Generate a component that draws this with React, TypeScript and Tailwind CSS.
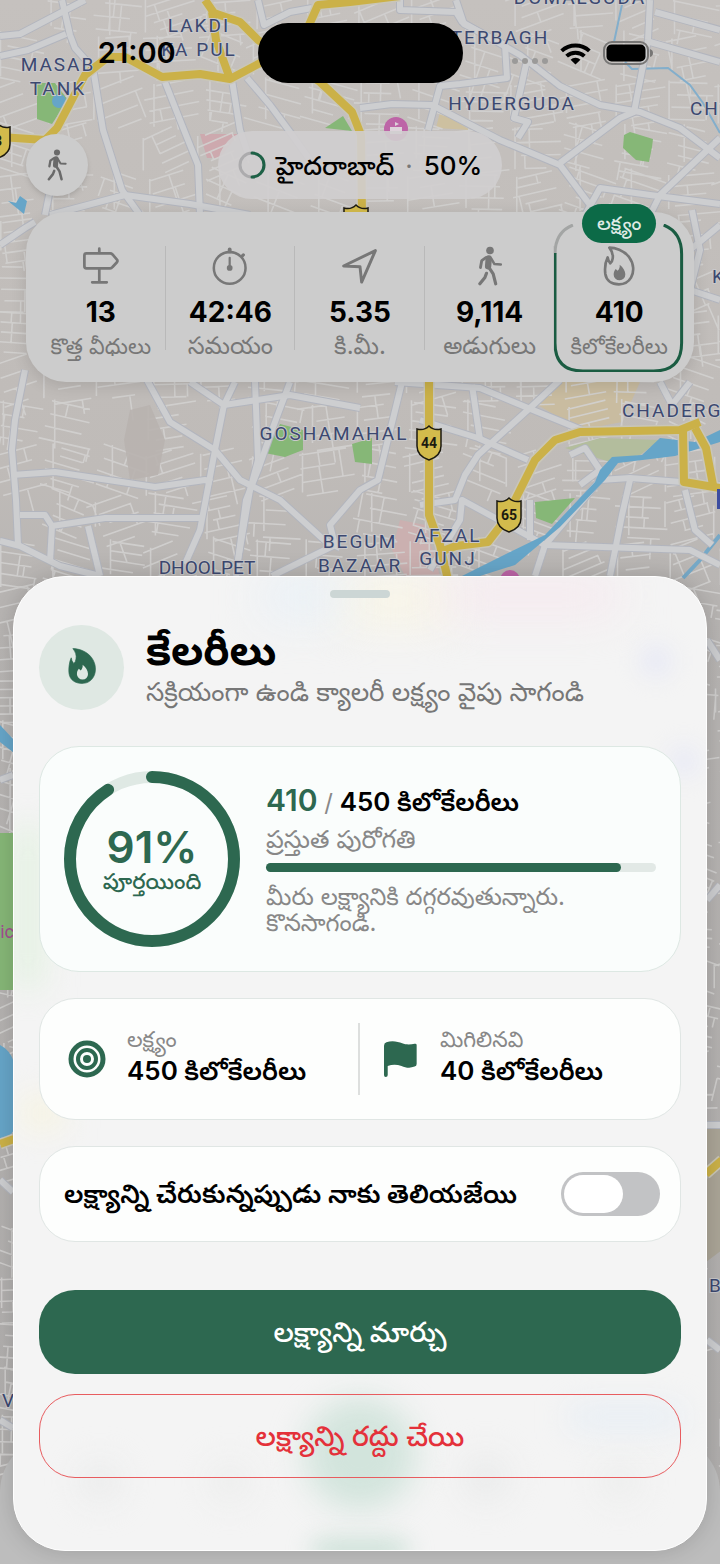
import { useState } from 'react';

const FONT = "font-['Inter','Noto_Sans_Telugu','Noto_Sans',sans-serif]";

// Small deterministic generator so the side streets stay the same on every render
function makeStreets(seed: number) {
  let s = seed;
  const rnd = () => {
    s = (s * 16807) % 2147483647;
    return s / 2147483647;
  };
  let d = '';
  for (let y = -10; y < 1564; y += 46) {
    for (let x = -10; x < 730; x += 52) {
      if (rnd() < 0.08 || (y > 620 && x > 30 && x < 650)) continue;
      const a = (rnd() - 0.5) * 0.9;
      const cos = Math.cos(a);
      const sin = Math.sin(a);
      const at = (u: number, v: number) =>
        `${(x + 26 + u * cos - v * sin).toFixed(1)} ${(y + 23 + u * sin + v * cos).toFixed(1)}`;
      const step = 8 + rnd() * 7;
      for (let v = -22; v < 24; v += step) {
        const from = -28 + rnd() * 18;
        const to = 28 - rnd() * 22;
        d += `M${at(from, v)}L${at(to, v)}`;
        if (rnd() > 0.35) {
          const u = from + rnd() * (to - from);
          d += `M${at(u, v)}L${at(u, v + step * (1 + Math.floor(rnd() * 2)))}`;
        }
      }
      d += `M${at(-24 + rnd() * 12, -24)}V${(y + 30 + rnd() * 16).toFixed(1)}`;
    }
  }
  return d;
}

const streets = makeStreets(4711);

const roads = [
  'M62 0 L70 35 L75 48 L93 68 L103 130 L122 190 L140 215',
  'M0 36 L20 34 L62 12 L85 0',
  'M0 56 L28 50 L66 34',
  'M165 82 L180 120 L198 165 L200 215',
  'M232 80 L240 130 L250 160',
  'M247 78 L270 105 L290 132 L310 160',
  'M50 215 L125 195 L190 204 L250 215',
  'M45 215 L50 190',
  'M0 245 L25 228 L35 222',
  'M258 0 L264 25 L290 12 L312 8',
  'M400 0 L400 10 L456 12 L462 22 L520 55 L560 86 L600 105 L640 112 L680 128 L720 158',
  'M456 0 L464 24 L505 45 L507 78 L460 84 L440 86 L428 130',
  'M360 108 L392 104 L432 105 L500 140 L560 165 L590 205 L600 230',
  'M527 60 L520 92 L514 118 L528 122 L518 138',
  'M560 163 L620 118 L634 112 L648 40 L650 0',
  'M650 42 L720 62', 'M655 12 L720 30',
  'M720 138 L660 195 L650 215',
  'M585 215 L600 188 L650 195 L720 204',
  'M25 370 L15 420 L12 450 L16 500 L18 545',
  'M12 475 L55 472 L155 487 L205 480 L212 482',
  'M0 541 L20 546 L60 566 L100 576',
  'M20 515 L45 515 L52 526 L105 518 L200 518',
  'M52 526 L50 562', 'M88 526 L100 576',
  'M147 380 L170 422 L215 450 L240 480 L252 486 L280 500 L324 540 L340 548',
  'M235 382 L224 405 L215 450 L200 530 L185 564',
  'M190 382 L224 405 L290 395 L360 408',
  'M255 382 L258 460 L250 490 L238 560',
  'M290 382 L272 430 L258 470 L246 500 L236 576',
  'M272 576 L335 545 L330 525 L360 490 L378 480 L402 382',
  'M395 382 L480 388 L528 408 L582 430',
  'M560 380 L530 408 L478 455 L465 475 L455 500 L420 505',
  'M420 420 L478 438 L528 460', 'M472 385 L480 440',
  'M430 570 L460 520 L462 500 L545 545 L600 480 L630 478 L720 485',
  'M545 545 L535 576', 'M545 545 L690 550 L720 565',
  'M570 455 L585 448 L600 470 L580 485', 'M530 500 L530 540',
  'M630 480 L622 515 L610 576', 'M685 490 L695 530 L712 545',
  'M660 382 L672 405 L690 382',
  'M692 210 L700 250 L690 290 L720 300', 'M690 250 L720 225',
  'M0 780 L13 775', 'M0 1180 L13 1192', 'M707 640 L720 660', 'M707 900 L720 885',
  'M707 1125 H720', 'M707 1340 L720 1350', 'M0 1420 L13 1428',
];

const highways = [
  'M0 137 L45 140 L57 128 L85 75 L108 57 L125 57 L162 77 L200 74 L230 79 L262 62 L300 45 L318 5 L350 2 L400 -4',
  'M205 0 L214 13 L240 22 L258 40 L320 82 L352 112 L361 135 L362 215',
  'M212 12 L216 40 L229 76',
  'M429 375 L429 515 L440 545 L448 580',
  'M440 552 L456 546 L488 542 L505 520 L535 460 L555 440 L580 432 L680 430 L700 422',
  'M683 430 L684 482 L720 488',
  'M695 428 L706 448 L713 485',
  'M0 1144 L14 1139',
  'M706 1174 L722 1160',
];

const mapLabels = [
  { x: 199, y: 32, text: 'LAKDI' },
  { x: 199, y: 56, text: 'KA PUL' },
  { x: 58, y: 71, text: 'MASAB' },
  { x: 58, y: 95, text: 'TANK' },
  { x: 580, y: 4, text: 'DOMALGUDA' },
  { x: 500, y: 44, text: 'TERBAGH' },
  { x: 512, y: 110, text: 'HYDERGUDA' },
  { x: 334, y: 440, text: 'GOSHAMAHAL' },
  { x: 360, y: 548, text: 'BEGUM' },
  { x: 360, y: 572, text: 'BAZAAR' },
  { x: 448, y: 542, text: 'AFZAL' },
  { x: 448, y: 565, text: 'GUNJ' },
];

const edgeLabels = [
  { x: 690, y: 115, text: 'CHIKKAD' },
  { x: 622, y: 417, text: 'CHADERGHAT' },
  { x: 712, y: 283, text: 'KACHI' },
  { x: 709, y: 1292, text: 'B' },
  { x: 2, y: 1407, text: 'V' },
];

function Shield({ x, y, text }: { x: number; y: number; text: string }) {
  return (
    <g transform={`translate(${x} ${y})`}>
      <path
        d="M-12 -14 Q-5 -12 0 -17 Q5 -12 12 -14 V3 C12 11 6 15 0 17 C-6 15 -12 11 -12 3z"
        fill="#d3bb4c"
        stroke="#1c1a10"
        strokeWidth="1.5"
      />
      <text y="5" textAnchor="middle" fontSize="14" fontWeight="700" fill="#1c1a10">{text}</text>
    </g>
  );
}

function CityMap() {
  return (
    <svg
      className="absolute inset-0 w-full h-full font-['Roboto',sans-serif]"
      viewBox="0 0 720 1564"
      preserveAspectRatio="xMidYMin slice"
      aria-hidden="true"
    >
      <defs>
        <linearGradient id="land" x1="0" y1="0" x2="0" y2="1">
          <stop offset="0" stopColor="#c5c1be" />
          <stop offset="0.3" stopColor="#bfbbb8" />
          <stop offset="0.38" stopColor="#b8b5b3" />
          <stop offset="1" stopColor="#b0aead" />
        </linearGradient>
      </defs>
      <rect width="720" height="1564" fill="url(#land)" />
      <path d="M555 382 H640 L622 422 L580 430 L538 405z" fill="#c9bca0" />
      <path d="M436 128 L440 112 L470 130z" fill="#cdc0a0" />
      <path d="M400 520 L425 525 L440 576 H405 L392 550z" fill="#cbb0b0" />
      <path d="M200 134 H238 L220 158 H207z" fill="#cda9ae" />
      <path d={streets} fill="none" stroke="#d2d0cf" strokeWidth="1.6" opacity="0.9" />
      <g fill="#b8b3af">
        <path d="M130 410 L150 405 L165 440 L158 475 L130 480 L124 440z" opacity="0.9" />
      </g>
      <g fill="#86b777">
        <path d="M37 83 H55 L68 100 L52 124 L37 119z" />
        <path d="M325 128 L343 116 L352 131z" />
        <path d="M624 135 L630 132 L653 139 L652 147 L649 162 L636 160 L623 148z" />
        <path d="M272 440 L280 424 L303 430 L303 450 L285 457 L265 453z" />
        <path d="M352 444 L372 438 V464 L355 462z" />
        <path d="M535 502 L575 498 L552 524 L536 518z" />
        <rect x="-4" y="833" width="20" height="157" />
      </g>
      <path d="M565 448 L600 438 L660 440 L640 455 L610 462z" fill="#b3bd9d" />
      <g fill="#66a5c8">
        <circle cx="59" cy="101" r="7" />
        <path d="M8 201 L16 203 L20 196 L27 201 L24 214z" />
        <path d="M0 725 L14 740 V753 L0 742z" />
        <path d="M0 1045 Q10 1050 14 1062 V1130 Q10 1138 0 1138z" />
      </g>
      <path d="M623 0 L614 42 M625 62 L632 69 L668 68 L690 85 L703 103 L720 133" fill="none" stroke="#83aecb" strokeWidth="2" />
      <path d="M720 535 L700 560 L683 578" fill="none" stroke="#76a8c6" strokeWidth="4" />
      <path d="M706 1128 H722 V1155 L706 1170z M706 1180 L722 1165 V1250 L706 1262z" fill="#aba597" />
      <g fill="none" strokeLinejoin="round">
        {roads.map((d) => <path key={d} d={d} stroke="#b2b5be" strokeWidth="8" />)}
        {roads.map((d) => <path key={d} d={d} stroke="#cdced0" strokeWidth="6" />)}
      </g>
      <path
        d="M720 430 L695 442 L660 438 L642 455 L612 457 L600 470 L595 482 L545 535 L500 557 L462 576 H480 L515 565 L560 527 L605 480 L618 463 L675 456 L720 442z"
        fill="#66a5c8"
      />
      <g fill="none" strokeLinejoin="round">
        {highways.map((d) => <path key={d} d={d} stroke="#c9c6b8" strokeWidth="11" />)}
        {highways.map((d) => <path key={d} d={d} stroke="#cbb148" strokeWidth="8" />)}
      </g>
      <circle cx="396" cy="129" r="12" fill="#bd65a7" />
      <path d="M390 127 H402 V134 H390z M395 122 L399 124 L395 126z" fill="#ded3db" />
      <circle cx="510" cy="580" r="10" fill="#bd65a7" />
      <g fill="#3c4870" fontSize="19" stroke="#c9c8ca" strokeWidth="2" paintOrder="stroke">
        <g letterSpacing="2">
          {mapLabels.map((l) => <text key={l.text} x={l.x} y={l.y} textAnchor="middle">{l.text}</text>)}
          {edgeLabels.map((l) => <text key={l.text} x={l.x} y={l.y}>{l.text}</text>)}
        </g>
        <text x="207" y="574" textAnchor="middle">DHOOLPET</text>
      </g>
      <text x="14" y="938" textAnchor="end" fontSize="18" fill="#a34c92">gic</text>
      <rect x="717" y="489" width="10" height="20" fill="#3d4da0" />
      <Shield x={-2} y={141} text="3" />
      <Shield x={356} y={222} text="" />
      <Shield x={429} y={443} text="44" />
      <Shield x={509} y={515} text="65" />
    </svg>
  );
}

function WalkIcon({ className }: { className: string }) {
  return (
    <svg className={className} viewBox="0 0 80 126" fill="none" stroke="currentColor" strokeLinecap="round" strokeLinejoin="round">
      <circle cx="40" cy="14" r="12" fill="currentColor" stroke="none" />
      <path d="M36 39 L34 64" strokeWidth="20" />
      <path d="M28 36 L14 46 L10 68" strokeWidth="9" />
      <path d="M44 40 L54 57 L74 58" strokeWidth="8" />
      <path d="M37 68 L50 88 L58 119" strokeWidth="10" />
      <path d="M29 86 L24 99 L8 119" strokeWidth="10" />
    </svg>
  );
}

const FLAME = 'M17 5 C34 5 60 12 76 33 C91 53 92 78 82 95 C72 112 57 115 46 115 C24 115 8 104 5 84 C3 68 6 46 12 34 Q13 44 20 52 Q26 47 27 38 C29 26 26 16 17 5z';
const EMBER = 'M48 56 C58 64 65 74 65 85 A17 17 0 0 1 30 86 C30 78 32 74 36 69 L42 74 C47 69 49 63 48 56z';

function FlameIcon({ className }: { className: string }) {
  return (
    <svg className={className} viewBox="0 0 92 120">
      <path d={FLAME} fill="none" stroke="currentColor" strokeWidth="8" strokeLinejoin="round" />
      <path d={EMBER} fill="currentColor" />
    </svg>
  );
}

function SolidFlameIcon({ className }: { className: string }) {
  return (
    <svg className={className} viewBox="0 0 92 120">
      <path d={FLAME} fill="currentColor" stroke="currentColor" strokeWidth="2" strokeLinejoin="round" />
      <path d={EMBER} fill="#dfe8e3" />
    </svg>
  );
}

function SignIcon({ className }: { className: string }) {
  return (
    <svg className={className} viewBox="0 0 114 118" fill="none" stroke="currentColor" strokeWidth="8" strokeLinecap="round" strokeLinejoin="round">
      <path d="M52 8 V20 M52 66 V106 M31 107 H74" />
      <path d="M14 22 H84 Q88 22 91 25 L104 40 Q107 44 104 48 L91 62 Q88 66 84 66 H14 Q8 66 8 60 V28 Q8 22 14 22z" />
    </svg>
  );
}

function StopwatchIcon({ className }: { className: string }) {
  return (
    <svg className={className} viewBox="0 0 118 126" fill="none" stroke="currentColor" strokeLinecap="round">
      <circle cx="58" cy="69" r="50" strokeWidth="8" />
      <path d="M58 11 V18" strokeWidth="12" />
      <path d="M98 31 L101 28" strokeWidth="10" />
      <path d="M58 37 V69" strokeWidth="7" />
      <circle cx="58" cy="69" r="9" fill="currentColor" stroke="none" />
    </svg>
  );
}

function LocationIcon({ className }: { className: string }) {
  return (
    <svg className={className} viewBox="-4 -4 122 122" fill="none" stroke="currentColor" strokeWidth="9" strokeLinejoin="round">
      <path d="M7 57 L104 10 L62 106 L57 59z" />
    </svg>
  );
}

function FlagIcon({ className }: { className: string }) {
  return (
    <svg className={className} viewBox="0 0 98 107">
      <path
        d="M0 14 Q0 7 7 4 C24 -3 42 2 54 7 C66 12 80 11 91 8 Q97 7 97 12 V68 Q97 74 91 76 C76 82 64 79 52 74 C38 69 24 69 11 74 V101 Q11 107 5 107 Q0 107 0 101z"
        fill="currentColor"
      />
    </svg>
  );
}

function TargetIcon({ className }: { className: string }) {
  return (
    <svg className={className} viewBox="0 0 38 38" fill="none" stroke="currentColor">
      <circle cx="19" cy="19" r="16" strokeWidth="5" />
      <circle cx="19" cy="19" r="9" strokeWidth="4" />
      <circle cx="19" cy="19" r="4" fill="currentColor" stroke="none" />
    </svg>
  );
}

function StatusBar() {
  return (
    <header className="grid grid-cols-[1fr_205px_1fr] items-center pt-[23px]">
      <div className="pl-4 text-center text-[29px] leading-8 font-semibold text-black">21:00</div>
      <div className="h-[60px] rounded-full bg-black"></div>
      <div className="flex items-center justify-center gap-3 pr-4">
        <div className="flex gap-1 pt-4">
          <span className="size-1.5 rounded-full bg-[#9b9a99]"></span>
          <span className="size-1.5 rounded-full bg-[#9b9a99]"></span>
          <span className="size-1.5 rounded-full bg-[#9b9a99]"></span>
          <span className="size-1.5 rounded-full bg-[#9b9a99]"></span>
        </div>
        <svg className="w-[31px] h-[23px]" viewBox="0 0 94 68" fill="none" stroke="#000" strokeWidth="12">
          <path d="M5 26 A62 62 0 0 1 89 26" />
          <path d="M20 42 A40 40 0 0 1 74 42" />
          <path d="M47 67 L32 53 A22 22 0 0 1 62 53z" fill="#000" stroke="none" />
        </svg>
        <svg className="w-[51px] h-6" viewBox="0 0 51 24">
          <rect x="1" y="1" width="44" height="22" rx="8" fill="none" stroke="#777675" strokeWidth="2" />
          <rect x="3.5" y="3.5" width="39" height="17" rx="5" />
          <path d="M47 8 Q50 9 50 12 Q50 15 47 16z" fill="#777675" />
        </svg>
      </div>
    </header>
  );
}

const stats = [
  { Icon: SignIcon, value: '13', label: 'కొత్త వీధులు' },
  { Icon: StopwatchIcon, value: '42:46', label: 'సమయం', large: true },
  { Icon: LocationIcon, value: '5.35', label: 'కి.మీ.', large: true },
  { Icon: WalkIcon, value: '9,114', label: 'అడుగులు', large: true },
  { Icon: FlameIcon, value: '410', label: 'కిలోకేలరీలు', goal: true },
];

function StatsCard() {
  return (
    <section className="mx-[26px] mt-[13px] grid grid-cols-5 rounded-[40px] bg-[#cccccc] px-2.5 pt-3 pb-2.5 shadow-[0_4px_16px_rgba(0,0,0,0.12)]">
      {stats.map(({ Icon, value, label, goal, large }, i) => (
        <div key={label} className="relative flex h-[148px] flex-col items-center pt-[22px]">
          {i < 3 && <span className="absolute right-0 top-[22px] h-[104px] w-px bg-[#b9b9b9]"></span>}
          {i === 3 && <span className="absolute right-0 top-[22px] h-[104px] w-px bg-[#c2c2c2]"></span>}
          {goal && (
            <>
              <svg className="absolute inset-0 w-full h-full" viewBox="0 0 130 148" preserveAspectRatio="none" fill="none" strokeWidth="3">
                <path d="M19 1 Q1 8 1 30" stroke="#a3a5a4" />
                <path d="M1 29 V119 Q1 147 29 147 H100 Q128 147 128 119 V30 Q128 8 110 1" stroke="#1a5c42" />
              </svg>
              <span className="absolute -top-5 rounded-full bg-[#0c6a47] px-[15px] text-[19px] leading-[39px] font-medium whitespace-nowrap text-[#dfeae5]">
                లక్ష్యం
              </span>
            </>
          )}
          <Icon className="h-10 w-10 text-[#777777]" />
          <strong className="mt-2.5 text-[28px] leading-8 font-bold text-black">{value}</strong>
          <span className={`mt-0.5 leading-8 whitespace-nowrap text-[#777777] ${large ? 'text-[24px]' : 'text-[22px]'}`}>
            {label}
          </span>
        </div>
      ))}
    </section>
  );
}

// Soft colour spots of the map showing through the frosted sheet
function SheetGlow() {
  return (
    <div className="absolute inset-0 overflow-hidden rounded-[52px]" aria-hidden="true">
      <span className="absolute left-[47%] top-1 h-10 w-28 bg-[#faf6e4] blur-xl"></span>
      <span className="absolute left-[36%] top-0 h-10 w-20 bg-[#e8f0f7] blur-xl"></span>
      <span className="absolute left-[62%] top-0 h-9 w-44 bg-[#f6e8ee] blur-xl"></span>
      <span className="absolute right-9 top-[70px] size-7 rounded-full bg-[#e4e6f6] blur-md"></span>
      <span className="absolute right-2 top-[170px] size-7 rounded-full bg-[#e6e8f6] blur-md"></span>
      <span className="absolute left-0 top-[250px] h-40 w-7 bg-[#e2f1e0] blur-lg"></span>
      <span className="absolute left-2 top-[520px] h-8 w-10 bg-[#f7f4e0] blur-lg"></span>
      <span className="absolute bottom-[125px] right-6 h-4 w-28 bg-[#e0ebf6] blur-lg"></span>
      <span className="absolute bottom-10 left-1/2 size-28 -translate-x-1/2 rounded-full bg-[#d2e4dc] blur-lg"></span>
      <span className="absolute -bottom-2 left-1/2 h-4 w-24 -translate-x-1/2 rounded-full bg-[#bcd9cc] blur-md"></span>
      <span className="absolute bottom-12 left-[66px] size-10 rounded-full bg-[#eaebeb] blur-lg"></span>
      <span className="absolute bottom-12 left-[196px] size-10 rounded-full bg-[#ecedec] blur-lg"></span>
      <span className="absolute bottom-12 right-[196px] size-12 rounded-full bg-[#eaebeb] blur-lg"></span>
      <span className="absolute bottom-12 right-[66px] size-10 rounded-full bg-[#ecedec] blur-lg"></span>
    </div>
  );
}

function GoalSheet() {
  const [notify, setNotify] = useState(false);
  const percent = 91;

  return (
    <section className="relative mx-[13px] mt-auto rounded-[52px] border border-white bg-[#f4f4f4] px-[25px] pt-[13px] pb-[72px] shadow-[0_0_24px_rgba(0,0,0,0.16)]">
      <SheetGlow />
      <div className="relative">
        <div className="mx-auto h-2 w-[60px] rounded-full bg-[#ccd6d5]"></div>

        <div className="mt-[27px] flex items-center gap-[22px]">
          <div className="flex size-[85px] shrink-0 items-center justify-center rounded-full bg-[#dfe8e3] pb-1">
            <SolidFlameIcon className="h-[38px] w-[30px] text-[#2d6850]" />
          </div>
          <div>
            <h1 className="text-[42px] leading-[48px] font-bold text-black">కేలరీలు</h1>
            <p className="text-[26px] leading-9 text-[#777777]">సక్రియంగా ఉండి క్యాలరీ లక్ష్యం వైపు సాగండి</p>
          </div>
        </div>

        <div className="mt-9 flex items-center gap-[26px] rounded-[40px] border border-[#dde8e3] bg-[#fafdfc] p-6">
          <div className="relative flex size-44 shrink-0 flex-col items-center justify-center">
            <svg className="absolute inset-0" viewBox="0 0 176 176" fill="none" strokeWidth="12">
              <circle cx="88" cy="88" r="82" stroke="#dfe9e4" />
              <circle
                cx="88"
                cy="88"
                r="82"
                pathLength="100"
                stroke="#2d6850"
                strokeDasharray={`${percent} 100`}
                strokeLinecap="round"
                transform="rotate(-90 88 88)"
              />
            </svg>
            <strong className="text-[44px] leading-[44px] font-semibold text-[#2d6850]">{percent}%</strong>
            <span className="text-[22px] leading-6 font-medium text-[#2d6850]">పూర్తయింది</span>
          </div>
          <div className="min-w-0 flex-1">
            <p className="text-[26px] leading-9 font-semibold text-black">
              <span className="text-[30px] text-[#2d6850]">410</span>
              <span className="text-[24px] font-normal text-[#888888]"> / </span>
              450 కిలోకేలరీలు
            </p>
            <p className="text-[25px] leading-9 text-[#888888]">ప్రస్తుత పురోగతి</p>
            <div className="mt-1.5 h-[9px] rounded-full bg-[#e2e9e6]">
              <div className="h-full rounded-full bg-[#2d6850]" style={{ width: `${percent}%` }}></div>
            </div>
            <p className="mt-3 text-[24px] leading-[26px] text-[#888888]">మీరు లక్ష్యానికి దగ్గరవుతున్నారు. కొనసాగండి.</p>
          </div>
        </div>

        <div className="mt-[26px] grid grid-cols-2 rounded-[36px] border border-[#e0e6e4] bg-[#fdfefd] py-6">
          <div className="flex items-center gap-[21px] border-r-2 border-[#dddfde] pl-7">
            <TargetIcon className="size-[38px] text-[#2d6850]" />
            <div>
              <p className="text-[22px] leading-8 text-[#888888]">లక్ష్యం</p>
              <p className="pb-2 text-[26px] leading-8 font-semibold text-black">450 కిలోకేలరీలు</p>
            </div>
          </div>
          <div className="flex items-center gap-[23px] pl-6">
            <FlagIcon className="h-9 w-[33px] text-[#2d6850]" />
            <div>
              <p className="text-[22px] leading-8 text-[#888888]">మిగిలినవి</p>
              <p className="pb-2 text-[26px] leading-8 font-semibold text-black">40 కిలోకేలరీలు</p>
            </div>
          </div>
        </div>

        <label className="mt-[26px] flex h-24 items-center justify-between rounded-[36px] border border-[#e0e6e4] bg-[#fdfefd] pr-5 pl-6">
          <span className="text-[26px] leading-8 font-semibold whitespace-nowrap text-black">
            లక్ష్యాన్ని చేరుకున్నప్పుడు నాకు తెలియజేయి
          </span>
          <input
            type="checkbox"
            role="switch"
            checked={notify}
            onChange={(e) => setNotify(e.target.checked)}
            className="h-11 w-[99px] shrink-0 cursor-pointer appearance-none rounded-full bg-[#c2c3c5] p-[3px] before:block before:h-[38px] before:w-[59px] before:rounded-full before:bg-white checked:bg-[#2d6850] checked:before:ml-auto"
          />
        </label>

        <button className="mt-12 block h-[84px] w-full rounded-[36px] bg-[#2d6850] text-[28px] font-medium text-white">
          లక్ష్యాన్ని మార్చు
        </button>
        <button className="mt-5 block h-[84px] w-full rounded-[36px] border border-[#e85c5f] text-[28px] font-medium text-[#e4313a]">
          లక్ష్యాన్ని రద్దు చేయి
        </button>
      </div>
    </section>
  );
}

export default function App() {
  return (
    <main className={`relative flex min-h-screen flex-col overflow-hidden bg-[#bebab7] pb-[13px] ${FONT}`}>
      <CityMap />
      <div className="absolute inset-x-0 bottom-0 h-32 rounded-t-[56px] bg-[#bdbdbd]"></div>
      <div className="relative flex flex-1 flex-col">
        <StatusBar />
        <div className="mt-12 grid grid-cols-[1fr_auto_1fr] items-center px-[26px]">
          <button aria-label="నడక" className="flex size-[62px] items-center justify-center rounded-full bg-[#cccccc] shadow-md">
            <WalkIcon className="h-8 w-6 text-[#6a6a6a]" />
          </button>
          <div className="flex h-[68px] items-center gap-2.5 rounded-full bg-[#d0cecf]/90 px-5 text-[26px] font-medium text-black">
            <svg className="size-7" viewBox="0 0 28 28" fill="none" strokeWidth="3">
              <circle cx="14" cy="14" r="12" stroke="#acabad" />
              <path d="M14 2 A12 12 0 0 1 14 26" stroke="#1d6146" strokeLinecap="round" />
            </svg>
            <span className="whitespace-nowrap">
              హైదరాబాద్ <span className="mx-1 font-normal text-[#777777]">·</span> 50%
            </span>
          </div>
        </div>
        <StatsCard />
        <GoalSheet />
      </div>
    </main>
  );
}
